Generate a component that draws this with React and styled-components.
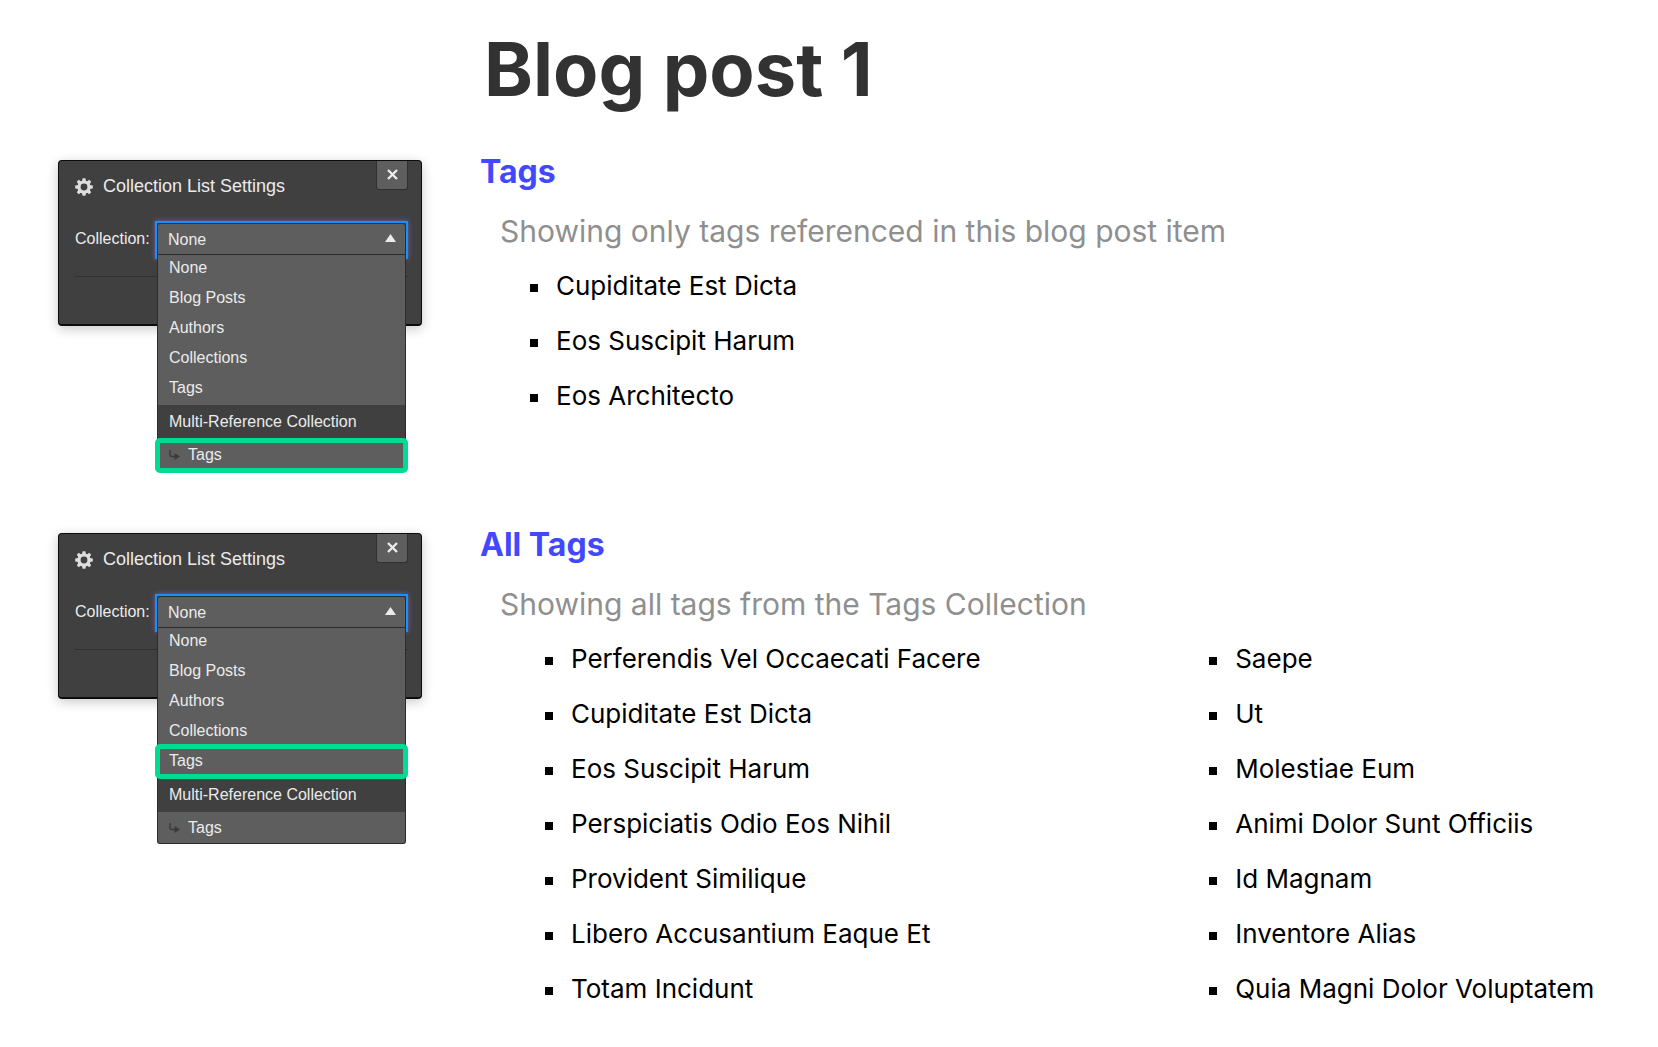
import React, { useId, useState } from 'react';
import styled, { createGlobalStyle, css } from 'styled-components';

const GlobalStyle = createGlobalStyle`
  *, *::before, *::after { box-sizing: border-box; }
  body {
    margin: 0;
    background: #ffffff;
    color: #000000;
    font-family: Inter, "Liberation Sans", sans-serif;
  }
`;

const Page = styled.main`
  display: flex;
  flex-direction: column;
  padding: 23px 6px 32px 58px;
`;

const PageTitle = styled.h1`
  margin: 0 0 37px 426px;
  color: #323232;
  font-size: 74px;
  font-weight: 700;
  line-height: 92px;
`;

const Section = styled.section`
  display: grid;
  grid-template-columns: 364px 1fr;
  column-gap: 58px;
  & + & { margin-top: 102px; }
`;

const Content = styled.div`
  min-width: 0;
`;

const Heading = styled.h2`
  margin: 0 0 19px;
  color: #4148ff;
  font-size: 32px;
  font-weight: 700;
  line-height: 40px;
`;

const Note = styled.p`
  margin: 0 0 7px;
  padding-left: 20px;
  color: #8f8f8f;
  font-size: 30px;
  line-height: 40px;
`;

const Columns = styled.div`
  display: grid;
  grid-template-columns: ${(p) => (p.$split ? '3fr 2fr' : '1fr')};
  padding-left: ${(p) => (p.$split ? 65 : 50)}px;
`;

const TagList = styled.ul`
  margin: 0;
  padding: 0;
  list-style: none;
`;

const TagItem = styled.li`
  display: flex;
  align-items: center;
  gap: 18px;
  font-size: 26px;
  line-height: 55px;
  white-space: nowrap;
  &::before {
    content: "";
    width: 8px;
    height: 8px;
    margin-top: 5px;
    background: #000000;
  }
`;

const Panel = styled.aside`
  position: relative;
  align-self: start;
  height: 166px;
  margin-top: 8px;
  padding: 0 13px 0 16px;
  border: 1px solid #0c0c0c;
  border-width: 1px 1px 2px;
  border-radius: 4px;
  background: #404040;
  box-shadow: 0 3px 12px rgba(0, 0, 0, 0.22);
  color: #ebebeb;
  font-family: "Liberation Sans", Arial, sans-serif;
`;

const PanelHeader = styled.header`
  display: flex;
  align-items: flex-start;
  height: 60px;
`;

const GearIcon = styled.svg`
  width: 18px;
  height: 18px;
  margin: 17px 10px 0 0;
`;

const PanelTitle = styled.h3`
  flex: 1;
  margin: 14px 0 0;
  font-size: 18px;
  font-weight: 400;
  line-height: 22px;
`;

const CloseButton = styled.button`
  display: flex;
  align-items: center;
  justify-content: center;
  width: 32px;
  height: 29px;
  padding: 0 0 2px;
  border: 1px solid #303030;
  border-top: 0;
  border-radius: 0 0 3px 3px;
  background: #5e5e5e;
  color: #ebebeb;
`;

const Field = styled.div`
  display: flex;
  align-items: flex-start;
`;

const FieldLabel = styled.label`
  width: 80px;
  font-size: 16px;
  line-height: 36px;
`;

const Dropdown = styled.div`
  position: relative;
  flex: 1;
  height: 38px;
  border: 2px solid #1492ff;
  border-bottom: 0;
  box-shadow: 0 0 5px rgba(130, 100, 190, 0.8);
`;

const Select = styled.select`
  display: block;
  width: 100%;
  height: 32px;
  padding: 0 10px;
  appearance: none;
  border: 1px solid #2c2c2c;
  border-radius: 3px 3px 0 0;
  outline: 0;
  background: #5e5e5e;
  color: #ebebeb;
  font-family: inherit;
  font-size: 16px;
`;

const Arrow = styled.svg`
  position: absolute;
  top: 11px;
  right: 10px;
  width: 11px;
  height: 8px;
  pointer-events: none;
`;

const Menu = styled.ul`
  position: absolute;
  z-index: 1;
  top: 32px;
  left: 0;
  right: 0;
  margin: 0;
  padding: 0;
  border: 1px solid #2c2c2c;
  border-top: 0;
  border-radius: 0 0 3px 3px;
  background: #5e5e5e;
  list-style: none;
`;

const MenuRow = styled.li`
  position: relative;
`;

const rowText = css`
  width: 100%;
  padding: 0 11px 4px;
  color: #ebebeb;
  font-family: inherit;
  font-size: 16px;
  text-align: left;
`;

const Choice = styled.button`
  ${rowText}
  display: flex;
  align-items: center;
  gap: 8px;
  height: ${(p) => (p.$nested ? 31 : 30)}px;
  padding-bottom: ${(p) => (p.$nested ? 0 : 4)}px;
  border: 0;
  background: transparent;
`;

const GroupName = styled.div`
  ${rowText}
  padding-bottom: 0;
  background: #404040;
  line-height: 34px;
`;

const Highlight = styled.span`
  position: absolute;
  z-index: 1;
  inset: ${(p) => (p.$nested ? '-1px -3px -3px' : '-4px -3px -1px')};
  border: 5px solid #00dc93;
  border-radius: 5px;
  pointer-events: none;
`;

const ReferenceArrow = styled.svg`
  width: 11px;
  height: 10px;
`;

const Rule = styled.hr`
  margin: 17px 0 0;
  border: 0;
  border-top: 1px solid #303030;
`;

const collections = ['None', 'Blog Posts', 'Authors', 'Collections', 'Tags'];

const teeth = [0, 45, 90, 135, 180, 225, 270, 315];

function Gear() {
  return (
    <GearIcon viewBox="0 0 18 18" aria-hidden="true">
      <circle cx="9" cy="9" r="5" fill="none" stroke="#dedede" strokeWidth="3.2" />
      {teeth.map((angle) => (
        <path
          key={angle}
          d="M7 3.4 7.6 0.2h2.8l.6 3.2z"
          fill="#dedede"
          transform={`rotate(${angle} 9 9)`}
        />
      ))}
    </GearIcon>
  );
}

function CollectionSettings({ highlighted }) {
  const id = useId();
  const [value, setValue] = useState('None');
  return (
    <Panel>
      <PanelHeader>
        <Gear />
        <PanelTitle>Collection List Settings</PanelTitle>
        <CloseButton type="button" aria-label="Close">
          <svg width="11" height="11" viewBox="0 0 11 11" aria-hidden="true">
            <path d="M1 1l9 9M10 1l-9 9" stroke="currentColor" strokeWidth="2.4" />
          </svg>
        </CloseButton>
      </PanelHeader>
      <Field>
        <FieldLabel htmlFor={id}>Collection:</FieldLabel>
        <Dropdown>
          <Select id={id} value={value} onChange={(e) => setValue(e.target.value)}>
            {collections.map((name) => (
              <option key={name}>{name}</option>
            ))}
          </Select>
          <Arrow viewBox="0 0 11 8" aria-hidden="true">
            <path d="M5.5 0 11 8H0z" fill="#ebebeb" />
          </Arrow>
          <Menu>
            {collections.map((name) => (
              <MenuRow key={name}>
                <Choice type="button" onClick={() => setValue(name)}>{name}</Choice>
                {highlighted === name && <Highlight />}
              </MenuRow>
            ))}
            <MenuRow>
              <GroupName>Multi-Reference Collection</GroupName>
            </MenuRow>
            <MenuRow>
              <Choice type="button" $nested>
                <ReferenceArrow viewBox="0 0 11 10" aria-hidden="true">
                  <path d="M1 0v4.5Q1 6.5 3 6.5h3" fill="none" stroke="#3a3a3a" strokeWidth="1.4" />
                  <path d="M5.5 3 11 6.5 5.5 10z" fill="#3a3a3a" />
                </ReferenceArrow>
                Tags
              </Choice>
              {highlighted === 'reference' && <Highlight $nested />}
            </MenuRow>
          </Menu>
        </Dropdown>
      </Field>
      <Rule />
    </Panel>
  );
}

function TagSection({ title, note, highlighted, columns }) {
  return (
    <Section>
      <CollectionSettings highlighted={highlighted} />
      <Content>
        <Heading>{title}</Heading>
        <Note>{note}</Note>
        <Columns $split={columns.length > 1}>
          {columns.map((tags) => (
            <TagList key={tags[0]}>
              {tags.map((tag) => (
                <TagItem key={tag}>{tag}</TagItem>
              ))}
            </TagList>
          ))}
        </Columns>
      </Content>
    </Section>
  );
}

const postTags = [['Cupiditate Est Dicta', 'Eos Suscipit Harum', 'Eos Architecto']];

const allTags = [
  [
    'Perferendis Vel Occaecati Facere',
    'Cupiditate Est Dicta',
    'Eos Suscipit Harum',
    'Perspiciatis Odio Eos Nihil',
    'Provident Similique',
    'Libero Accusantium Eaque Et',
    'Totam Incidunt',
  ],
  [
    'Saepe',
    'Ut',
    'Molestiae Eum',
    'Animi Dolor Sunt Officiis',
    'Id Magnam',
    'Inventore Alias',
    'Quia Magni Dolor Voluptatem',
  ],
];

export default function App() {
  return (
    <>
      <GlobalStyle />
      <Page>
        <PageTitle>Blog post 1</PageTitle>
        <TagSection
          title="Tags"
          note="Showing only tags referenced in this blog post item"
          highlighted="reference"
          columns={postTags}
        />
        <TagSection
          title="All Tags"
          note="Showing all tags from the Tags Collection"
          highlighted="Tags"
          columns={allTags}
        />
      </Page>
    </>
  );
}
